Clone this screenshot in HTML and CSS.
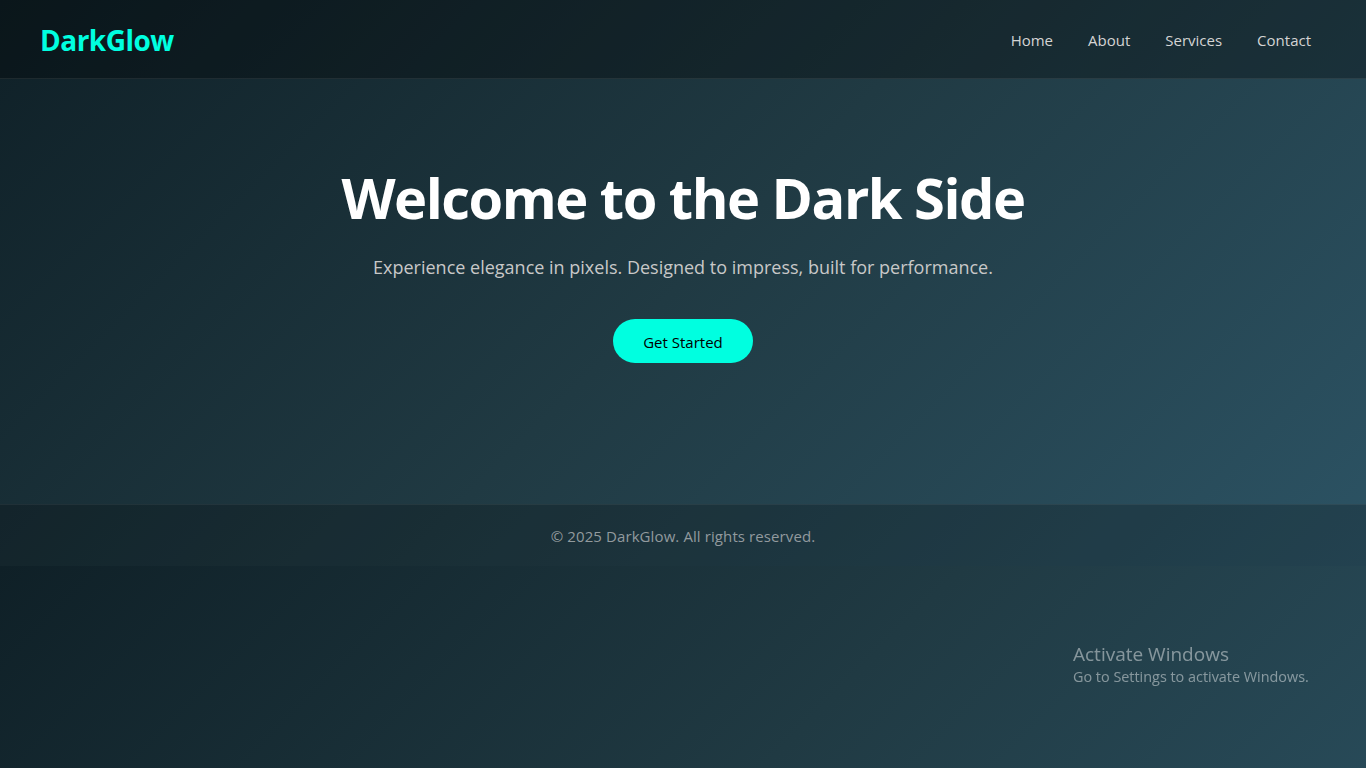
FILE: index.html
```html
<!DOCTYPE html>
<html lang="en">
<head>
<meta charset="UTF-8">
<title>DarkGlow</title>
<link rel="stylesheet" href="styles.css">
</head>
<body>
<header class="site-header">
  <div class="logo">DarkGlow</div>
  <nav class="nav">
    <a href="#" class="nav-link">Home</a>
    <a href="#" class="nav-link">About</a>
    <a href="#" class="nav-link">Services</a>
    <a href="#" class="nav-link">Contact</a>
  </nav>
</header>
<section class="hero">
  <h1 class="hero-title">Welcome to the Dark Side</h1>
  <p class="hero-text">Experience elegance in pixels. Designed to impress, built for performance.</p>
  <a href="#" class="btn">Get Started</a>
</section>
<footer class="site-footer">
  <p class="footer-text">© 2025 DarkGlow. All rights reserved.</p>
</footer>
<div class="watermark">
  <div class="wm-title">Activate Windows</div>
  <div class="wm-sub">Go to Settings to activate Windows.</div>
</div>
</body>
</html>
```
FILE: styles.css
```css
* { box-sizing: border-box; }
body {
  margin: 0;
  font-family: "Open Sans", "Noto Sans", sans-serif;
  background: linear-gradient(135deg, #0f2027, #203a43, #2c5364);
  color: #fff;
}
.site-header {
  display: flex;
  justify-content: space-between;
  align-items: center;
  height: 79px;
  padding: 2px 55px 0 40px;
  background: rgba(0, 0, 0, 0.3);
  border-bottom: 1px solid rgba(255, 255, 255, 0.08);
}
.logo {
  font-size: 28px;
  font-weight: 700;
  color: #00ffe0;
  line-height: 1;
  letter-spacing: -0.5px;
}
.nav {
  display: flex;
  gap: 35px;
}
.nav-link {
  color: #d4d4d4;
  text-decoration: none;
  font-size: 15px;
}
.hero {
  display: flex;
  flex-direction: column;
  align-items: center;
  text-align: center;
  padding: 85px 20px 141px;
}
.hero-title {
  margin: 0;
  font-size: 56px;
  font-weight: 700;
  line-height: 1.2;
  letter-spacing: -1.5px;
}
.hero-text {
  margin: 23px 0 0;
  font-size: 18px;
  line-height: 1.5;
  color: #c8c8c8;
}
.btn {
  margin-top: 38px;
  display: inline-flex;
  align-items: center;
  justify-content: center;
  width: 140px;
  height: 44px;
  padding-top: 2px;
  border-radius: 22px;
  background: #00ffe0;
  color: #000;
  text-decoration: none;
  font-size: 15px;
}
.site-footer {
  border-top: 1px solid rgba(255, 255, 255, 0.06);
  background: rgba(0, 0, 0, 0.2);
  padding: 21px 20px 19px;
  text-align: center;
}
.footer-text {
  margin: 0;
  font-size: 15px;
  line-height: 21px;
  letter-spacing: 0.1px;
  color: #929a9e;
}
.watermark {
  position: fixed;
  left: 1073px;
  top: 643px;
  color: rgba(255, 255, 255, 0.45);
  line-height: 1.2;
}
.wm-title { font-size: 19px; }
.wm-sub { font-size: 14.4px; margin-top: 2px; }
```
